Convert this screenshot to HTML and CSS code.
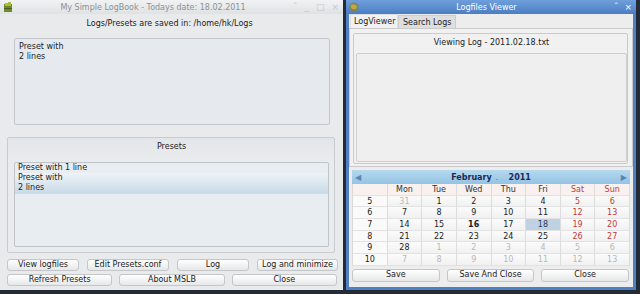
FILE: index.html
```html
<!DOCTYPE html>
<html lang="en">

<head>
  <meta charset="UTF-8">
  <meta name="viewport" content="width=device-width, initial-scale=1.0">
  <title>My Simple LogBook</title>
  <link rel="stylesheet" href="styles.css">
</head>

<body>
  <div class="window logbook">
    <div class="titlebar light">
      <svg class="app-icon" width="10" height="10" viewBox="0 0 10 10">
        <rect x="1" y="2" width="8" height="8" fill="#6f8a2a" />
        <rect x="2" y="1" width="3" height="3" fill="#c9b33a" />
        <rect x="5" y="0" width="3" height="4" fill="#a4bd3c" />
        <rect x="1" y="6" width="8" height="1" fill="#4b5f1a" />
      </svg>
      <span class="title">My Simple LogBook - Todays date: 18.02.2011</span>
      <div class="title-buttons faint">
        <span>&#710;</span><span>_</span><span>&#9633;</span><span>&#215;</span>
      </div>
    </div>
    <div class="logbook-body">
      <p class="path">Logs/Presets are saved in: /home/hk/Logs</p>
      <div class="editor">Preset with<br>2 lines</div>
      <div class="group presets">
        <div class="group-title">Presets</div>
        <ul class="preset-list">
          <li>Preset with 1 line</li>
          <li class="selected">Preset with<br>2 lines</li>
        </ul>
      </div>
      <div class="btn-row four">
        <button>View logfiles</button>
        <button>Edit Presets.conf</button>
        <button>Log</button>
        <button>Log and minimize</button>
      </div>
      <div class="btn-row three">
        <button>Refresh Presets</button>
        <button>About MSLB</button>
        <button>Close</button>
      </div>
    </div>
  </div>

  <div class="window viewer">
    <div class="titlebar blue">
      <svg class="app-icon" width="10" height="10" viewBox="0 0 10 10">
        <circle cx="5" cy="5" r="4.5" fill="#7a8a4a" />
        <path d="M2 3 Q5 1 8 4 L7 7 Q4 8 2 6 Z" fill="#c8a050" />
      </svg>
      <span class="title">Logfiles Viewer</span>
      <div class="title-buttons">
        <span>&#710;</span><span>&#215;</span>
      </div>
    </div>
    <div class="viewer-body">
      <div class="tabs">
        <span class="tab active">LogViewer</span>
        <span class="tab">Search Logs</span>
      </div>
      <div class="tab-pane">
        <div class="group log-group">
          <div class="group-title">Viewing Log - 2011.02.18.txt</div>
          <div class="log-text"></div>
        </div>
      </div>

      <div class="calendar">
        <div class="cal-nav">
          <span class="arrow">&#9664;</span>
          <span class="month">February<small>.</small></span>
          <span class="year">2011</span>
          <span class="arrow">&#9654;</span>
        </div>
        <div class="cal-grid" id="calGrid"></div>
      </div>

      <div class="btn-row three viewer-buttons">
        <button>Save</button>
        <button>Save And Close</button>
        <button>Close</button>
      </div>
    </div>
  </div>

  <script src="script.js"></script>
</body>

</html>
```

FILE: script.js
```js
// build the month grid: week number + 7 days
const days = ['Mon', 'Tue', 'Wed', 'Thu', 'Fri', 'Sat', 'Sun'];
const weeks = [
  [5, [31, 1, 2, 3, 4, 5, 6]],
  [6, [7, 8, 9, 10, 11, 12, 13]],
  [7, [14, 15, 16, 17, 18, 19, 20]],
  [8, [21, 22, 23, 24, 25, 26, 27]],
  [9, [28, 1, 2, 3, 4, 5, 6]],
  [10, [7, 8, 9, 10, 11, 12, 13]]
];

const grid = document.getElementById('calGrid');

function cell(text, cls) {
  const div = document.createElement('div');
  div.className = 'cell ' + (cls || '');
  div.textContent = text;
  grid.appendChild(div);
}

cell('', 'head');
days.forEach(function (d, i) {
  cell(d, 'head' + (i > 4 ? ' weekend' : ''));
});

weeks.forEach(function (week, row) {
  cell(week[0], 'weeknum');
  week[1].forEach(function (day, i) {
    let cls = '';
    const other = (row === 0 && day > 20) || (row >= 4 && day < 20 && !(row === 4 && day === 28));
    if (other) {
      cls = 'other';
    } else if (i > 4) {
      cls = 'weekend';
    }
    if (!other && day === 16) cls += ' today';
    if (!other && day === 18) cls += ' selected';
    cell(day, cls);
  });
});
```

FILE: styles.css
```css
* {
  box-sizing: border-box;
}

body {
  margin: 0;
  width: 640px;
  height: 294px;
  overflow: hidden;
  background-color: #232b37;
  font-family: 'DejaVu Sans', sans-serif;
  font-size: 8px;
  color: #222;
  display: flex;
  gap: 3px;
  align-items: flex-start;
}

.window {
  height: 290px;
  display: flex;
  flex-direction: column;
}

.titlebar {
  height: 14px;
  flex: none;
  display: flex;
  align-items: center;
}

.titlebar .title {
  flex: 1;
  text-align: center;
}

.app-icon {
  margin-left: 3px;
  flex: none;
}

.title-buttons {
  display: flex;
  gap: 6px;
  padding-right: 4px;
  font-size: 9px;
}

.titlebar.light {
  background: linear-gradient(#f0f2f3, #dfe2e4);
  color: #8f9193;
}

.title-buttons.faint {
  color: #c4c6c8;
  gap: 7px;
}

.titlebar.blue {
  background: linear-gradient(#6f9fdb, #4b7dc3);
  color: #fff;
}

/* left window */
.logbook {
  width: 343px;
  background-color: #e8eaec;
}

.logbook-body {
  flex: 1;
  display: flex;
  flex-direction: column;
}

.path {
  margin: 5px 0 0;
  height: 10px;
  line-height: 10px;
  text-align: center;
  padding-right: 4px;
}

.editor {
  margin: 9px 13px 0 14px;
  height: 87px;
  padding: 3px 4px;
  line-height: 10px;
  background-color: #e6eaee;
  border: 1px solid #c3c7cb;
  border-radius: 2px;
}

.group {
  border: 1px solid #c9cccf;
  border-radius: 2px;
}

.presets {
  margin: 12px 8px 0 7px;
  height: 116px;
  padding: 0 5px 0 6px;
  background: linear-gradient(#e3e6e8, #e9ebed 20%);
}

.group-title {
  text-align: center;
  height: 10px;
  line-height: 10px;
  margin-top: 4px;
}

.preset-list {
  list-style: none;
  margin: 10px 0 0;
  padding: 0;
  height: 85px;
  background-color: #e8edf2;
  border: 1px solid #bfc4c9;
  border-radius: 2px;
  line-height: 10px;
}

.preset-list li {
  padding: 0 3px;
}

.preset-list li.selected {
  background: linear-gradient(#eef3f7, #c9dbe8);
  border-bottom: 1px solid #d2dde6;
}

.btn-row {
  display: grid;
  column-gap: 7px;
  margin: 0 6px 0 7px;
}

.btn-row.four {
  grid-template-columns: 72px 82px 72px 81px;
  column-gap: 8px;
  margin-top: 6px;
}

.btn-row.three {
  grid-template-columns: 1fr 1fr 1fr;
  margin-top: 3px;
}

button {
  height: 12px;
  padding: 0;
  font-family: 'DejaVu Sans', sans-serif;
  font-size: 8px;
  line-height: 10px;
  color: #222;
  background: linear-gradient(#ffffff, #e6e7e8);
  border: 1px solid #c4c6c8;
  border-radius: 3px;
}

/* right window */
.viewer {
  width: 290px;
  background-color: #4f7fc4;
}

.viewer-body {
  flex: 1;
  margin: 0 3px 3px;
  background-color: #ededed;
  display: flex;
  flex-direction: column;
}

.tabs {
  height: 14px;
  display: flex;
  padding-left: 1px;
}

.tab {
  height: 14px;
  line-height: 13px;
  padding: 0 4px;
  background-color: #dedede;
  border: 1px solid #cccccc;
  border-bottom: none;
  margin-top: 1px;
}

.tab.active {
  background-color: #f1f1f1;
  margin-top: 0;
  width: 48px;
  padding: 0 3px;
  border-color: #e0e0e0;
}

.tab-pane {
  height: 139px;
  background-color: #f1f1f1;
  border: 1px solid #cacaca;
  padding: 4px 4px 2px 3px;
}

.log-group {
  height: 100%;
  padding: 0 0 2px 2px;
}

.log-group .group-title {
  margin-top: 4px;
}

.log-text {
  margin-top: 5px;
  height: 109px;
  background-color: #efefef;
  border: 1px solid #cfcfcf;
  border-radius: 2px;
}

.calendar {
  margin: 3px 3px 0 3px;
}

.cal-nav {
  height: 14px;
  display: flex;
  align-items: center;
  background: linear-gradient(#b5d8ee, #94c3e4);
  font-weight: bold;
  color: #1b2a55;
  padding: 0 3px;
}

.cal-nav .arrow {
  color: #5a86b6;
  font-size: 8px;
}

.cal-nav .month {
  margin-left: auto;
}

.cal-nav .month small {
  font-weight: normal;
  margin-left: 4px;
  font-size: 6px;
}

.cal-nav .year {
  margin-left: 11px;
  margin-right: auto;
}

.cal-grid {
  display: grid;
  grid-template-columns: repeat(8, 1fr);
  grid-auto-rows: 11.7px;
  background-color: #f7f7f7;
  border-left: 1px solid #dadada;
}

.cell {
  text-align: center;
  line-height: 11px;
  border-right: 1px solid #dcdcdc;
  border-bottom: 1px solid #e2e2e2;
  background: linear-gradient(#fbfbfb, #f1f1f1);
}

.cell.head {
  background: #f8f1ef;
  color: #333;
}

.cell.weeknum {
  background: #fafafa;
}

.cell.weekend {
  color: #c23a3a;
}

.cell.other {
  color: #b8b8b8;
}

.cell.today {
  font-weight: bold;
}

.cell.selected {
  background: #bed2e4;
  color: #2a3a55;
}

.viewer-buttons {
  margin: 5px 4px 0 3px;
}

.viewer-buttons button {
  height: 13px;
}
```
